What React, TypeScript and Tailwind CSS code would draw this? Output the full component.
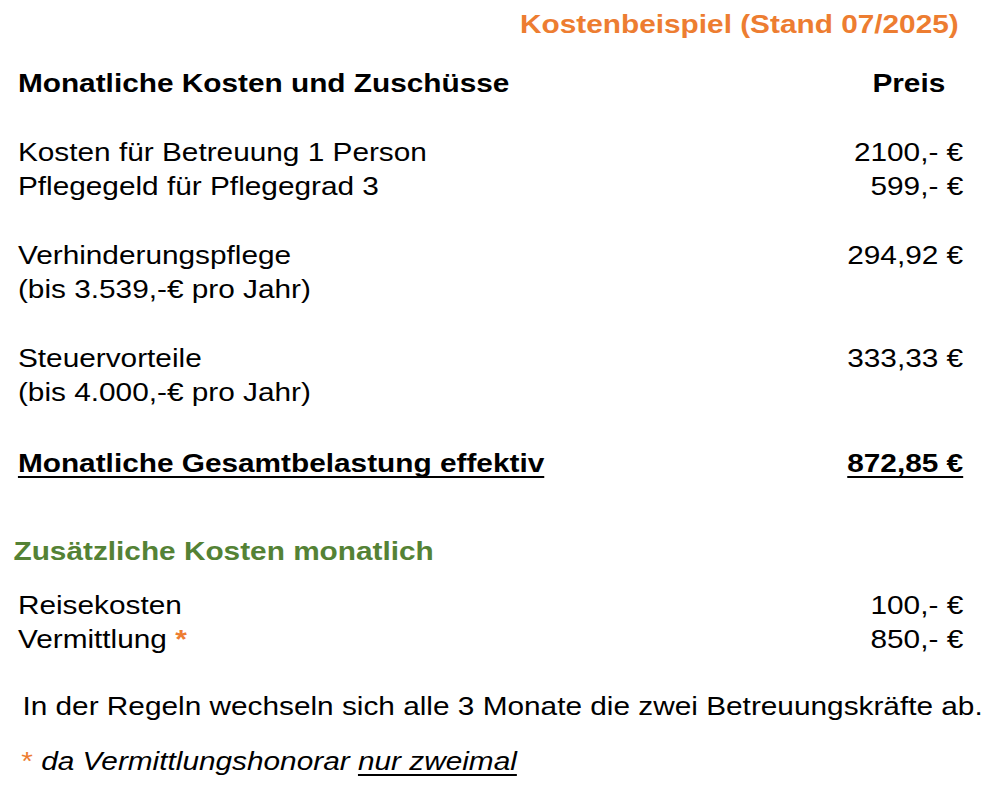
const ORANGE = 'text-[#ed7d31]';
const UNDERLINE = 'underline decoration-2 underline-offset-[4px] [text-decoration-skip-ink:none]';

type Row = { label: string; sub?: string; value: string };

const mainRows: Row[][] = [
    [
        { label: 'Kosten für Betreuung 1 Person', value: '2100,- €' },
        { label: 'Pflegegeld für Pflegegrad 3', value: '599,- €' },
    ],
    [{ label: 'Verhinderungspflege', sub: '(bis 3.539,-€ pro Jahr)', value: '294,92 €' }],
    [{ label: 'Steuervorteile', sub: '(bis 4.000,-€ pro Jahr)', value: '333,33 €' }],
];

function PriceRow({ row }: { row: Row }) {
    return (
        <div className="pl-[16px] pr-[20px]">
            <div className="flex justify-between">
                <span>{row.label}</span>
                <span>{row.value}</span>
            </div>
            {row.sub && <div>{row.sub}</div>}
        </div>
    );
}

export default function App() {
    return (
        <div className="w-[986px] h-[787px] overflow-hidden bg-white text-black">
            {/* the sheet is slightly stretched horizontally */}
            <div className="w-[880px] origin-top-left scale-x-[1.12] pt-[7px] font-['Liberation_Sans',Arial,sans-serif] text-[26.6px] leading-[34px]">
                <div className={`pr-[24px] text-right font-bold ${ORANGE}`}>Kostenbeispiel (Stand 07/2025)</div>

                <div className="mt-[25px] flex justify-between pl-[16px] pr-[36px] font-bold">
                    <span>Monatliche Kosten und Zuschüsse</span>
                    <span>Preis</span>
                </div>

                <div className="mt-[35px] flex flex-col gap-[35px]">
                    {mainRows.map((group, i) => (
                        <div key={i}>
                            {group.map((row) => (
                                <PriceRow key={row.label} row={row} />
                            ))}
                        </div>
                    ))}
                </div>

                <div className="mt-[37px] flex justify-between pl-[16px] pr-[20px] font-bold">
                    <span className={UNDERLINE}>Monatliche Gesamtbelastung effektiv</span>
                    <span className={UNDERLINE}>872,85 €</span>
                </div>

                <div className="mt-[54px] pl-[12px] font-bold text-[#548235]">Zusätzliche Kosten monatlich</div>

                <div className="mt-[20px]">
                    <PriceRow row={{ label: 'Reisekosten', value: '100,- €' }} />
                    <div className="flex justify-between pl-[16px] pr-[20px]">
                        <span>
                            Vermittlung <span className={`font-bold ${ORANGE}`}>*</span>
                        </span>
                        <span>850,- €</span>
                    </div>
                </div>

                <div className="mt-[33px] pl-[20px]">
                    In der Regeln wechseln sich alle 3 Monate die zwei Betreuungskräfte ab.
                </div>

                <div className="mt-[21px] pl-[19px]">
                    <span className={ORANGE}>*</span>{' '}
                    <span className="italic">
                        da Vermittlungshonorar <span className={UNDERLINE}>nur zweimal</span>
                    </span>
                </div>
            </div>
        </div>
    );
}
